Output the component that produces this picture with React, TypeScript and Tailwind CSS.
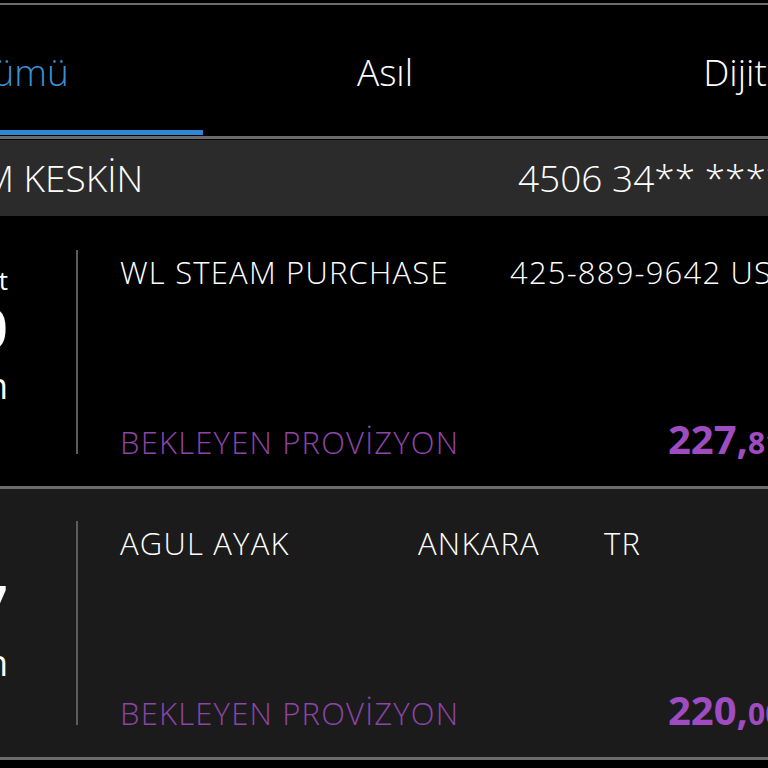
import React from 'react';

interface Txn {
  weekday?: string;
  day: string;
  month: string;
  parts: { text: string; width?: string }[];
  status: string;
  amount: string;
  cents: string;
  bg: string;
  datePad: string;
}

const txns: Txn[] = [
  {
    weekday: 'Cmt',
    day: '20',
    month: 'Kasım',
    parts: [{ text: 'WL STEAM PURCHASE', width: 'w-[390px]' }, { text: '425-889-9642 US' }],
    status: 'BEKLEYEN PROVİZYON',
    amount: '227,',
    cents: '81 TL',
    bg: 'bg-black',
    datePad: 'pt-[46px]',
  },
  {
    day: '17',
    month: 'Kasım',
    parts: [
      { text: 'AGUL AYAK', width: 'w-[298px]' },
      { text: 'ANKARA', width: 'w-[186px]' },
      { text: 'TR' },
    ],
    status: 'BEKLEYEN PROVİZYON',
    amount: '220,',
    cents: '00 TL',
    bg: 'bg-[#1b1b1b]',
    datePad: 'pt-[84px]',
  },
];

const tabs = ['Tümü', 'Asıl', 'Dijital'];

function TxnRow({ t }: { t: Txn }) {
  return (
    <div className={`flex h-[271px] border-b-[3px] border-[#6b6b6b] ${t.bg}`}>
      {/* date column, cut off by the screen edge */}
      <div className={`flex w-[76px] shrink-0 ${t.datePad}`}>
        <div className="flex w-[8px] flex-col items-end overflow-hidden text-white">
          {t.weekday && <span className="whitespace-nowrap text-[26px] leading-[32px]">{t.weekday}</span>}
          <span className="whitespace-nowrap text-[54px] font-semibold leading-[62px]">{t.day}</span>
          <span className="whitespace-nowrap text-[36px] leading-[56px]">{t.month}</span>
        </div>
      </div>
      <div className="my-[32px] w-[2px] shrink-0 bg-[#5c5c5c]" />
      <div className="flex min-w-0 flex-1 flex-col justify-between pb-[25px] pl-[42px] pt-[36px] font-light tracking-[1.2px]">
        <div className="flex whitespace-nowrap text-[31px] leading-[36px] text-white">
          {t.parts.map((p) => (
            <span key={p.text} className={`shrink-0 ${p.width ?? ''}`}>
              {p.text}
            </span>
          ))}
        </div>
        <div className="flex items-baseline whitespace-nowrap">
          <span className="w-[548px] shrink-0 text-[31px] leading-[36px] text-[#8d45a8]">{t.status}</span>
          <span className="text-[40px] font-bold leading-[36px] tracking-normal text-[#9f4cc0]">{t.amount}</span>
          <span className="text-[30px] font-bold leading-[36px] tracking-normal text-[#9f4cc0]">{t.cents}</span>
        </div>
      </div>
    </div>
  );
}

export default function App() {
  return (
    <div className="h-[768px] w-[768px] overflow-hidden bg-black font-['Open_Sans','Noto_Sans',sans-serif]">
      <div className="h-[3px]" />
      <div className="h-[2px] bg-[#6b6b6b]" />

      {/* tabs */}
      <div className="border-b-[3px] border-[#6b6b6b]">
        <div className="-ml-[161px] flex w-[1092px]">
          {tabs.map((tab, i) => (
            <div key={tab} className="flex h-[131px] w-[364px] flex-col">
              <div
                className={`flex flex-1 items-center justify-center pt-[8px] text-[37px] font-light ${
                  i === 0 ? 'text-[#3b8fd4]' : 'text-white'
                }`}
              >
                {tab}
              </div>
              <div className={`h-[5px] ${i === 0 ? 'bg-[#2d87d4]' : ''}`} />
              <div className="h-[1px]" />
            </div>
          ))}
        </div>
      </div>

      {/* card holder */}
      <div className="mt-[1px] flex h-[76px] items-center whitespace-nowrap bg-[#2b2b2b] text-[37px] font-light text-white">
        <span className="-ml-[18px] w-[536px] shrink-0">M KESKİN</span>
        <span>4506 34** **** ****</span>
      </div>
      <div className="h-[2px] bg-black" />

      {txns.map((t) => (
        <TxnRow key={t.amount} t={t} />
      ))}
    </div>
  );
}
